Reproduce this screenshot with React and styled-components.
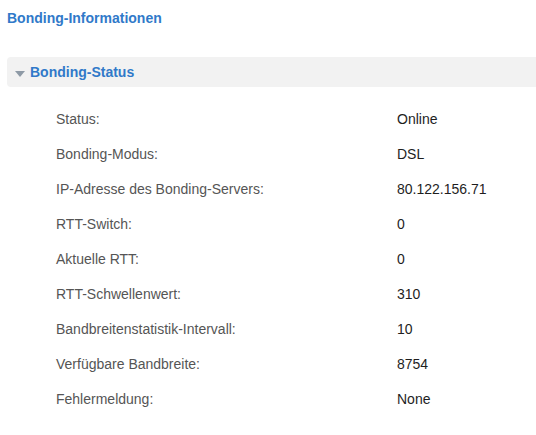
import React from 'react';
import styled, { createGlobalStyle } from 'styled-components';

const GlobalStyle = createGlobalStyle`
  body {
    margin: 0;
    background: #fff;
    font-family: 'Liberation Sans', Arial, sans-serif;
  }
`;

const rows = [
  { label: 'Status:', value: 'Online' },
  { label: 'Bonding-Modus:', value: 'DSL' },
  { label: 'IP-Adresse des Bonding-Servers:', value: '80.122.156.71' },
  { label: 'RTT-Switch:', value: '0' },
  { label: 'Aktuelle RTT:', value: '0' },
  { label: 'RTT-Schwellenwert:', value: '310' },
  { label: 'Bandbreitenstatistik-Intervall:', value: '10' },
  { label: 'Verfügbare Bandbreite:', value: '8754' },
  { label: 'Fehlermeldung:', value: 'None' },
];

const Page = styled.div`
  padding: 10px 0 0 7px;
  width: 536px;
  box-sizing: border-box;
`;

const Title = styled.h1`
  margin: 0;
  font-size: 14px;
  font-weight: bold;
  color: #3079c9;
  line-height: 16px;
`;

const SectionHeader = styled.div`
  margin-top: 31px;
  height: 30px;
  background: #f2f2f2;
  border-radius: 4px 0 0 4px;
  display: flex;
  align-items: center;
  padding-left: 8px;
  gap: 5px;
`;

const Caret = styled.span`
  width: 0;
  height: 0;
  border-left: 5px solid transparent;
  border-right: 5px solid transparent;
  border-top: 6px solid #8e9aa6;
  margin-top: 3px;
`;

const SectionTitle = styled.h2`
  margin: 0;
  font-size: 14px;
  font-weight: bold;
  color: #3079c9;
`;

const Table = styled.div`
  padding: 14px 0 0 49px;
  display: flex;
  flex-direction: column;
`;

const Row = styled.div`
  display: grid;
  grid-template-columns: 341px 1fr;
  height: 35px;
  align-items: center;
  font-size: 14px;
`;

const Label = styled.span`
  color: #555;
`;

const Value = styled.span`
  color: #1e1e1e;
`;

export default function App() {
  return (
    <Page>
      <GlobalStyle />
      <Title>Bonding-Informationen</Title>
      <SectionHeader>
        <Caret />
        <SectionTitle>Bonding-Status</SectionTitle>
      </SectionHeader>
      <Table>
        {rows.map((r) => (
          <Row key={r.label}>
            <Label>{r.label}</Label>
            <Value>{r.value}</Value>
          </Row>
        ))}
      </Table>
    </Page>
  );
}
